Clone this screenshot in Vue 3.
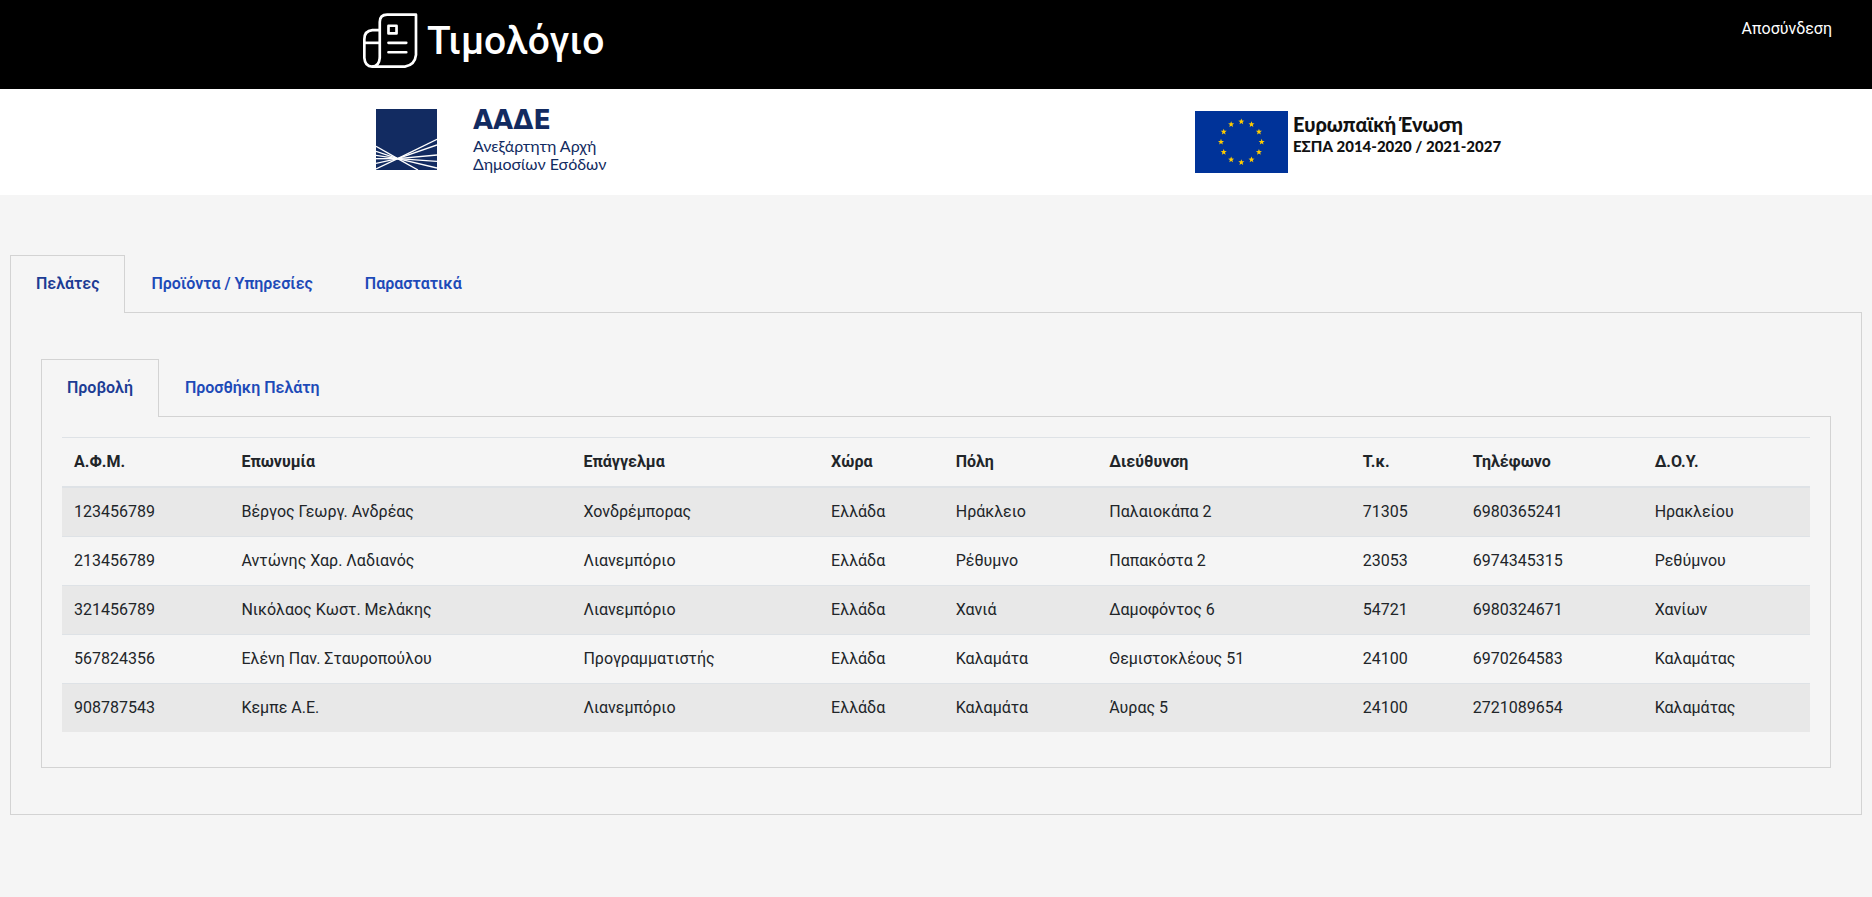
<script setup>
import { ref } from 'vue'

const mainTabs = ['Πελάτες', 'Προϊόντα / Υπηρεσίες', 'Παραστατικά']
const customerTabs = ['Προβολή', 'Προσθήκη Πελάτη']
const activeMain = ref(0)
const activeCustomer = ref(0)

const columns = ['Α.Φ.Μ.', 'Επωνυμία', 'Επάγγελμα', 'Χώρα', 'Πόλη', 'Διεύθυνση', 'Τ.κ.', 'Τηλέφωνο', 'Δ.Ο.Υ.']
const customers = [
  ['123456789', 'Βέργος Γεωργ. Ανδρέας', 'Χονδρέμπορας', 'Ελλάδα', 'Ηράκλειο', 'Παλαιοκάπα 2', '71305', '6980365241', 'Ηρακλείου'],
  ['213456789', 'Αντώνης Χαρ. Λαδιανός', 'Λιανεμπόριο', 'Ελλάδα', 'Ρέθυμνο', 'Παπακόστα 2', '23053', '6974345315', 'Ρεθύμνου'],
  ['321456789', 'Νικόλαος Κωστ. Μελάκης', 'Λιανεμπόριο', 'Ελλάδα', 'Χανιά', 'Δαμοφόντος 6', '54721', '6980324671', 'Χανίων'],
  ['567824356', 'Ελένη Παν. Σταυροπούλου', 'Προγραμματιστής', 'Ελλάδα', 'Καλαμάτα', 'Θεμιστοκλέους 51', '24100', '6970264583', 'Καλαμάτας'],
  ['908787543', 'Κεμπε Α.Ε.', 'Λιανεμπόριο', 'Ελλάδα', 'Καλαμάτα', 'Άυρας 5', '24100', '2721089654', 'Καλαμάτας'],
]

// Five-pointed star outline centred on the origin
const starPoints = Array.from({ length: 10 }, (_, i) => {
  const r = i % 2 ? 4 : 9.5
  const a = (Math.PI / 5) * i - Math.PI / 2
  return `${(r * Math.cos(a)).toFixed(2)},${(r * Math.sin(a)).toFixed(2)}`
}).join(' ')

const stars = Array.from({ length: 12 }, (_, i) => {
  const a = (Math.PI / 6) * i
  return `translate(${(139 + 61 * Math.sin(a)).toFixed(2)} ${(93 - 61 * Math.cos(a)).toFixed(2)})`
})

// Edge points of the rays leaving the vanishing point of the emblem
const rays = [
  [183, 91], [183, 108], [183, 138], [183, 157], [183, 177], [126, 183],
  [0, 112], [0, 127], [0, 139], [0, 149], [0, 163], [0, 180],
]
</script>

<template>
  <header class="topbar">
    <a class="brand" href="#">
      <svg class="brand-icon" viewBox="38 40 164 164" fill="none" stroke="#fff" stroke-width="8" stroke-linejoin="round" aria-hidden="true">
        <path d="M88 174V67Q88 45 110 45H196V165Q193 195 163 200H65" />
        <path d="M88 91H66Q42 93 42 118V174Q44 200 65 200Q86 200 88 174" />
        <path d="M42 129H88" />
        <path d="M114 78H138V101H114Z" />
        <path d="M114 129H167M114 157H167" stroke-linecap="round" />
      </svg>
      <span class="brand-name">Τιμολόγιο</span>
    </a>
    <a class="logout" href="#">Αποσύνδεση</a>
  </header>

  <div class="partners">
    <div class="aade">
      <svg class="aade-mark" viewBox="0 0 183 183" aria-hidden="true">
        <rect width="183" height="183" fill="#122b61" />
        <path v-for="(p, i) in rays" :key="i" :d="`M65 149L${p[0]} ${p[1]}`" stroke="#fff" stroke-width="4" />
      </svg>
      <div class="aade-text">
        <strong class="aade-title">ΑΑΔΕ</strong>
        <span>Ανεξάρτητη Αρχή</span>
        <span>Δημοσίων Εσόδων</span>
      </div>
    </div>
    <div class="eu">
      <svg class="eu-flag" viewBox="0 0 279 186" aria-hidden="true">
        <rect width="279" height="186" fill="#039" />
        <polygon v-for="(t, i) in stars" :key="i" :points="starPoints" :transform="t" fill="#fc0" />
      </svg>
      <div class="eu-text">
        <strong class="eu-title">Ευρωπαϊκή Ένωση</strong>
        <strong class="eu-programme">ΕΣΠΑ 2014-2020 / 2021-2027</strong>
      </div>
    </div>
  </div>

  <main class="content">
    <div class="tabs" role="tablist">
      <button
        v-for="(tab, i) in mainTabs" :key="tab" type="button" role="tab"
        class="tab" :class="{ active: i === activeMain }" :aria-selected="i === activeMain"
        @click="activeMain = i"
      >{{ tab }}</button>
    </div>
    <section class="panel outer">
      <div class="tabs" role="tablist">
        <button
          v-for="(tab, i) in customerTabs" :key="tab" type="button" role="tab"
          class="tab" :class="{ active: i === activeCustomer }" :aria-selected="i === activeCustomer"
          @click="activeCustomer = i"
        >{{ tab }}</button>
      </div>
      <section class="panel inner">
        <table class="table">
          <thead>
            <tr><th v-for="c in columns" :key="c" scope="col">{{ c }}</th></tr>
          </thead>
          <tbody>
            <tr v-for="row in customers" :key="row[0]">
              <td v-for="(cell, i) in row" :key="i">{{ cell }}</td>
            </tr>
          </tbody>
        </table>
      </section>
    </section>
  </main>
</template>

<style>
body {
  margin: 0;
  background: #f5f5f5;
  color: #212529;
  font: 400 16px/24px Roboto, "Noto Sans", sans-serif;
}
</style>

<style scoped>
.topbar {
  display: grid;
  grid-template-columns: 1fr minmax(auto, 1146px) 1fr;
  align-items: start;
  min-height: 89px;
  box-sizing: border-box;
  padding-top: 13px;
  background: #000;
}
.brand {
  grid-column: 2;
  justify-self: start;
  display: flex;
  align-items: center;
  gap: 9px;
  color: #fff;
  text-decoration: none;
}
.brand-icon {
  width: 55px;
  height: 55px;
}
.brand-name {
  font-size: 39px;
  font-weight: 500;
  line-height: 52px;
}
.logout {
  justify-self: end;
  margin: 4px 40px 0 0;
  color: #fff;
  text-decoration: none;
}
.partners {
  display: grid;
  grid-template-columns: 376fr 819fr 677fr;
  align-items: start;
  padding: 14px 0 22px;
  background: #fff;
}
.aade {
  grid-column: 2;
  display: flex;
  align-items: flex-start;
  gap: 36px;
  padding-top: 6px;
}
.aade-mark {
  width: 61px;
  height: 61px;
}
.aade-text {
  display: flex;
  flex-direction: column;
  color: #122b61;
  font: 400 16px/18px Lato, "Noto Sans", sans-serif;
}
.aade-title {
  margin-bottom: 6px;
  font: 700 26px/22px "DejaVu Sans", sans-serif;
}
.eu {
  display: flex;
  align-items: flex-start;
  gap: 5px;
  padding-top: 8px;
}
.eu-flag {
  width: 93px;
  height: 62px;
}
.eu-text {
  display: flex;
  flex-direction: column;
  padding-top: 1px;
  color: #111;
  font: 700 20px/24px Lato, "Noto Sans", sans-serif;
}
.eu-programme {
  font-size: 15px;
  line-height: 20px;
}
.content {
  padding: 60px 10px 0;
}
.tabs {
  display: flex;
  margin-bottom: -1px;
}
.tab {
  position: relative;
  padding: 16px 25px 17px;
  border: 1px solid transparent;
  border-bottom: 0;
  background: none;
  color: #1d4ab8;
  font: 600 16px/24px Roboto, "Noto Sans", sans-serif;
  cursor: pointer;
}
.tab.active {
  border-color: #d3d3d3;
  background: #f5f5f5;
  color: #1c3c94;
}
.panel {
  border: 1px solid #d3d3d3;
}
.outer {
  padding: 46px 30px;
}
.inner {
  padding: 20px 20px 35px;
}
.table {
  width: 100%;
  border-collapse: collapse;
}
.table th,
.table td {
  padding: 12px;
  border-top: 1px solid #dee2e6;
  text-align: left;
}
.table th {
  border-bottom: 2px solid #dee2e6;
  font-weight: 700;
}
.table tbody tr:nth-child(odd) {
  background: #e8e8e8;
}
</style>
